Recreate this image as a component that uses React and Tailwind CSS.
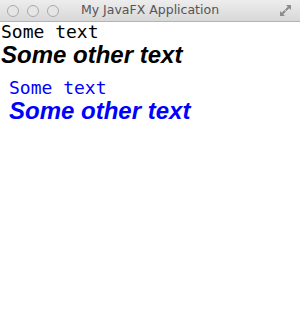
import React from 'react';

function TitleBar() {
  return (
    <div className="grid grid-cols-[1fr_auto_1fr] items-center h-[22px] border-b border-[#b3b3b3] bg-gradient-to-b from-[#ededed] to-[#d8d8d8]">
      <div className="flex gap-[8px] pl-[7px]">
        <span className="w-[12px] h-[12px] rounded-full border border-[#a9a9a9] bg-[#e6e6e6]" />
        <span className="w-[12px] h-[12px] rounded-full border border-[#a9a9a9] bg-[#e6e6e6]" />
        <span className="w-[12px] h-[12px] rounded-full border border-[#a9a9a9] bg-[#e6e6e6]" />
      </div>
      <div className="text-center text-[12.5px] text-[#555555]" style={{ fontFamily: '"DejaVu Sans", sans-serif' }}>
        My JavaFX Application
      </div>
      <div className="flex justify-end pr-[8px]">
        <svg width="13" height="13" viewBox="0 0 13 13">
          <path d="M7 1h5v5l-1.8-1.8L7.5 7 6 5.5 8.8 2.8z" fill="#8c8c8c" />
          <path d="M6 12H1V7l1.8 1.8L5.5 6 7 7.5 4.2 10.2z" fill="#8c8c8c" />
        </svg>
      </div>
    </div>
  );
}

export default function App() {
  return (
    <div className="w-[300px] h-[322px] bg-white overflow-hidden">
      <TitleBar />
      <div className="pl-[1px]">
        <div className="text-[18px] leading-[20px] text-black" style={{ fontFamily: '"DejaVu Sans Mono", monospace' }}>
          Some text
        </div>
        <div className="text-[24px] leading-[26px] font-bold italic text-black" style={{ fontFamily: '"Liberation Sans", Arial, sans-serif' }}>
          Some other text
        </div>
      </div>
      <div className="pl-[9px] pt-[10px]">
        <div className="text-[18px] leading-[20px] text-[#0000ff]" style={{ fontFamily: '"DejaVu Sans Mono", monospace' }}>
          Some text
        </div>
        <div className="text-[24px] leading-[26px] font-bold italic text-[#0000ff]" style={{ fontFamily: '"Liberation Sans", Arial, sans-serif' }}>
          Some other text
        </div>
      </div>
    </div>
  );
}
